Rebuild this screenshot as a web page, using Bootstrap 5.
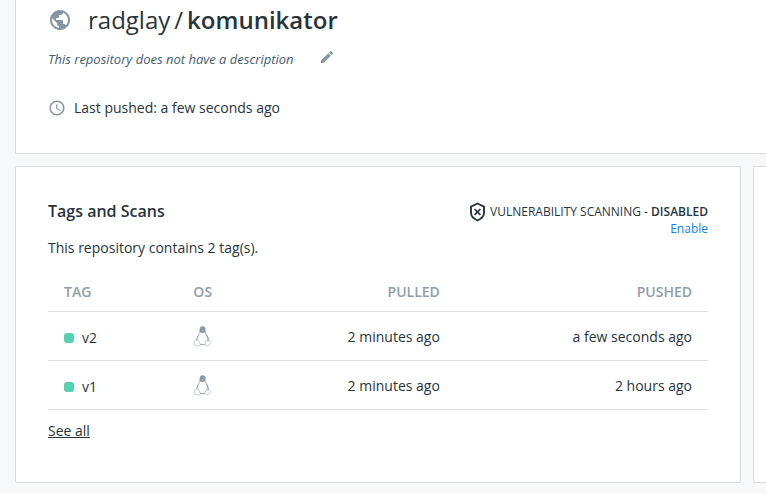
<!DOCTYPE html>
<html lang="en">
<head>
<meta charset="utf-8">
<meta name="viewport" content="width=device-width, initial-scale=1">
<title>radglay/komunikator</title>
<link href="https://cdn.jsdelivr.net/npm/bootstrap@5.3.0/dist/css/bootstrap.min.css" rel="stylesheet">
<style>
body { background: #f7f8fa; color: #27343b; font-family: "Open Sans", sans-serif; font-size: 14px; line-height: 20px; }
.page { padding-left: 15px; overflow-x: hidden; }
.panel { background: #fff; border: 1px solid #d8dce0; border-radius: 2px; }
.panel-open { border-right: 0; border-top-right-radius: 0; border-bottom-right-radius: 0; }
.repo-head { border-top: 0; border-top-left-radius: 0; padding: 4px 32px 35px; margin-bottom: 12px; }
.repo-name { font-size: 24px; line-height: 32px; margin-left: 16px; }
.repo-name a, .see-all { color: inherit; }
.repo-desc { font-size: 13px; color: #445d6e; margin-top: 13px; }
.edit-btn { margin-left: 25px; margin-bottom: 4px; }
.pushed-line { margin-top: 29px; gap: 8px; }
.slate { fill: #8596a2; }
.tags-panel { padding: 32px 32px 41px; }
.tags-title { font-size: 16px; line-height: 24px; }
.scan { font-size: 12px; line-height: 17px; padding-top: 4px; }
.scan svg { margin: -2px 0; }
.scan a { color: #0b80f0; }
.side-panel { flex: 0 0 13px; }
.cards-row { gap: 12px; }
.tag-count { margin: 1px 0 13px; }
.tag-table { --bs-table-bg: transparent; --bs-table-color: #27343b; color: #27343b; table-layout: fixed; border-color: #dcdee0; }
.tag-table > :not(caption) > * > * { padding: 15px 16px 13px; height: 49px; }
.tag-table thead th { color: #8f9ea9; font-weight: 600; padding-top: 10px; padding-bottom: 9px; height: 40px; }
.tag-table .os-cell { padding-top: 14px; }
.tag-table .name-cell { padding-top: 16px; padding-bottom: 12px; }
.dot { width: 10px; height: 10px; border-radius: 3px; background: #55d0b1; }
.col-tag { width: 19.6%; } .col-os { width: 16%; } .col-pulled { width: 26.2%; }
.tag-cell { gap: 8px; }
.more-line { padding-top: 11px; }
</style>
<script src="https://cdn.jsdelivr.net/npm/bootstrap@5.3.0/dist/js/bootstrap.bundle.min.js" defer></script>
</head>
<body>
<svg class="d-none" aria-hidden="true">
  <symbol id="tux" viewBox="0 0 18 21">
    <path fill="#8799a4" d="M9.500.3c-2 0-2.900 1.300-2.900 3.100 0 2.400.1 3.200-1 4.900C4.200 10.400 3.200 12.400 3.400 14.300l1.500.8c-.5-2.600 1-4.500 2-7.100.5-1.500 4.500-1.500 5.200 0 1.100 2.700 2.500 4.500 2 7.200l1.700-.6c.2-2.500-.9-4.700-2.400-6.500-1-1.300-.9-2.300-.9-4.500C12.500 1.500 11.500.3 9.500.3z"/>
    <path fill="#fff" stroke="#c8d0d6" stroke-width=".4" d="M7 6.300Q9.500 8.200 11.900 6.300C12.700 9.200 14.700 11.500 14.400 14.800L12.500 18H6.500l-2.300-3.200c0-3 2.100-5.500 2.800-8.500z"/>
    <path fill="#fff" stroke="#aab6be" stroke-width=".7" d="M1.700 14.900c1.300 0 1.400-1.100 2.500-1.100 1.200 0 1.700 2 2.700 3.500.8 1.500-.3 3-2 2.700-1.400-.5-2.500-.6-3.500-.9-.9-.4.200-1.400.3-4.200zM13.500 14.300c.8 1.600 2.300.9 3.100.2.500 1.700.5 2.100 1.100 2.800-.6 1-2.100 1.600-2.900 2.500-1.300.8-2.500 0-2.600-1.200.1-1.900.4-3.800 1.300-4.300z"/>
    <path fill="#dfe4e7" stroke="#71838e" stroke-width=".5" d="M7.700 4.300Q9.500 3.300 11.200 4.400 10 6 7.700 4.300z"/>
    <path stroke="#8799a4" stroke-width=".8" d="M7 18.600h5"/>
  </symbol>
</svg>
<div class="page">
  <header class="panel panel-open repo-head">
    <div class="d-flex align-items-center">
      <svg class="slate flex-shrink-0" width="24" height="24" viewBox="0 0 24 24" aria-hidden="true"><path d="M12 2C6.480 2 2 6.480 2 12s4.480 10 10 10 10-4.480 10-10S17.520 2 12 2zm-1 17.930c-3.950-.49-7-3.850-7-7.930 0-.62.080-1.210.21-1.790L9 15v1c0 1.100.9 2 2 2v1.930zm6.900-2.540c-.26-.81-1-1.390-1.900-1.390h-1v-3c0-.55-.45-1-1-1H8v-2h2c.55 0 1-.45 1-1V7h2c1.100 0 2-.9 2-2v-.41c2.930 1.190 5 4.060 5 7.410 0 2.080-.8 3.970-2.100 5.390z"/></svg>
      <h1 class="repo-name mb-0 fw-normal d-flex gap-1"><a href="#" class="text-decoration-none">radglay</a><span>/</span><strong class="fw-semibold">komunikator</strong></h1>
    </div>
    <div class="repo-desc d-flex align-items-center">
      <em>This repository does not have a description</em>
      <button type="button" class="edit-btn btn p-0 border-0 d-flex" aria-label="Edit description">
        <svg class="slate" width="16" height="16" viewBox="0 0 24 24"><path d="M3 17.250V21h3.750L17.810 9.940l-3.750-3.750L3 17.250zM20.710 7.040c.39-.39.39-1.020 0-1.410l-2.340-2.340c-.39-.39-1.020-.39-1.410 0l-1.830 1.830 3.750 3.750 1.830-1.830z"/></svg>
      </button>
    </div>
    <div class="pushed-line d-flex align-items-center">
      <svg class="slate" width="18" height="18" viewBox="0 0 24 24" aria-hidden="true"><path d="M11.990 2C6.470 2 2 6.480 2 12s4.470 10 9.990 10C17.520 22 22 17.520 22 12S17.520 2 11.990 2zM12 20c-4.420 0-8-3.580-8-8s3.580-8 8-8 8 3.580 8 8-3.580 8-8 8zm.5-13H11v6l5.250 3.150.75-1.230-4.500-2.670z"/></svg>
      <span>Last pushed: a few seconds ago</span>
    </div>
  </header>
  <div class="cards-row d-flex">
    <main class="panel tags-panel flex-grow-1">
      <div class="d-flex justify-content-between">
        <h2 class="tags-title fw-semibold mb-0">Tags and Scans</h2>
        <div class="scan text-end">
          <div class="d-flex align-items-center gap-1">
            <svg width="17" height="20" viewBox="0 0 17 20" fill="none" stroke="#27343b" aria-hidden="true"><path stroke-width="1.900" stroke-linejoin="round" d="M8.500 1.500L15 4.600v6.400c0 3.400-2.800 5.800-6.500 7.500C4.800 16.800 2 14.400 2 11V4.600z"/><path stroke-width="1.700" d="M5.600 7l5.800 5.800M11.400 7l-5.800 5.800"/></svg>
            <span>VULNERABILITY SCANNING - <strong class="fw-semibold">DISABLED</strong></span>
          </div>
          <a href="#" class="text-decoration-none">Enable</a>
        </div>
      </div>
      <p class="tag-count">This repository contains 2 tag(s).</p>
      <table class="tag-table table mb-0">
        <thead><tr><th scope="col" class="col-tag">TAG</th><th scope="col" class="col-os">OS</th><th scope="col" class="col-pulled text-end">PULLED</th><th scope="col" class="text-end">PUSHED</th></tr></thead>
        <tbody>
          <tr><td class="name-cell"><div class="tag-cell d-flex align-items-center"><span class="dot"></span>v2</div></td><td class="os-cell"><svg class="d-block" width="18" height="21" role="img" aria-label="Linux"><use href="#tux"/></svg></td><td class="text-end">2 minutes ago</td><td class="text-end">a few seconds ago</td></tr>
          <tr><td class="name-cell"><div class="tag-cell d-flex align-items-center"><span class="dot"></span>v1</div></td><td class="os-cell"><svg class="d-block" width="18" height="21" role="img" aria-label="Linux"><use href="#tux"/></svg></td><td class="text-end">2 minutes ago</td><td class="text-end">2 hours ago</td></tr>
        </tbody>
      </table>
      <div class="more-line"><a href="#" class="see-all">See all</a></div>
    </main>
    <aside class="panel panel-open side-panel"></aside>
  </div>
</div>
</body>
</html>
